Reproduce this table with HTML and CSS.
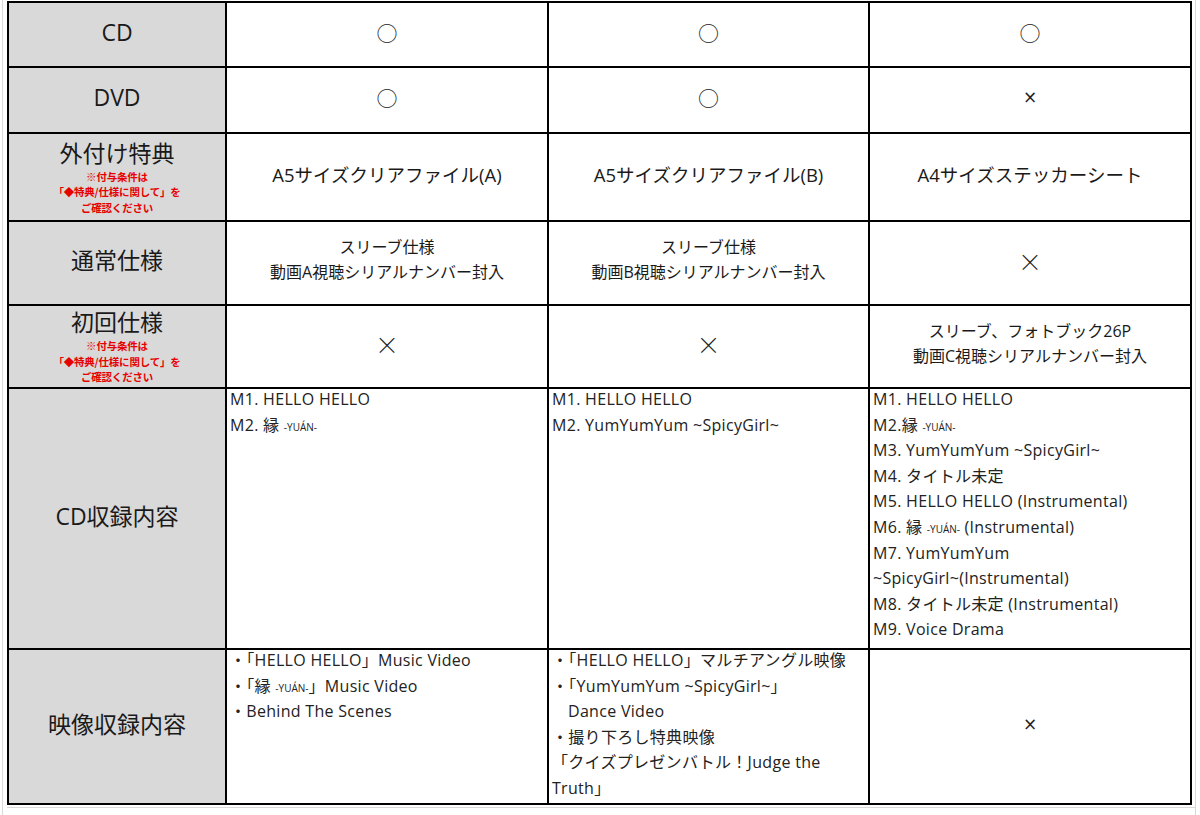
FILE: index.html
```html
<!DOCTYPE html>
<html lang="ja">
<head>
<meta charset="utf-8">
<title>仕様比較</title>
<link rel="stylesheet" href="styles.css">
</head>
<body>
<div class="sheet">
  <div class="grid">
    <div class="cell h"><span class="label">CD</span></div>
    <div class="cell c"><span class="maru">○</span></div>
    <div class="cell c"><span class="maru">○</span></div>
    <div class="cell c"><span class="maru">○</span></div>

    <div class="cell h"><span class="label">DVD</span></div>
    <div class="cell c"><span class="maru">○</span></div>
    <div class="cell c"><span class="maru">○</span></div>
    <div class="cell c"><span class="batsu-s">×</span></div>

    <div class="cell h">
      <span class="label tall">外付け特典</span>
      <span class="note">※付与条件は<br>「◆特典/仕様に関して」を<br>ご確認ください</span>
    </div>
    <div class="cell c"><span class="val">A5サイズクリアファイル(A)</span></div>
    <div class="cell c"><span class="val">A5サイズクリアファイル(B)</span></div>
    <div class="cell c"><span class="val">A4サイズステッカーシート</span></div>

    <div class="cell h"><span class="label">通常仕様</span></div>
    <div class="cell c"><span class="val2">スリーブ仕様<br>動画A視聴シリアルナンバー封入</span></div>
    <div class="cell c"><span class="val2">スリーブ仕様<br>動画B視聴シリアルナンバー封入</span></div>
    <div class="cell c"><span class="batsu-l">×</span></div>

    <div class="cell h">
      <span class="label tall">初回仕様</span>
      <span class="note">※付与条件は<br>「◆特典/仕様に関して」を<br>ご確認ください</span>
    </div>
    <div class="cell c"><span class="batsu-l">×</span></div>
    <div class="cell c"><span class="batsu-l">×</span></div>
    <div class="cell c"><span class="val2">スリーブ、フォトブック26P<br>動画C視聴シリアルナンバー封入</span></div>

    <div class="cell h"><span class="label">CD収録内容</span></div>
    <div class="cell l">
      <div>M1. HELLO HELLO</div>
      <div>M2. 縁 <small>-YUÁN-</small></div>
    </div>
    <div class="cell l">
      <div>M1. HELLO HELLO</div>
      <div>M2. YumYumYum ~SpicyGirl~</div>
    </div>
    <div class="cell l">
      <div>M1. HELLO HELLO</div>
      <div>M2.縁 <small>-YUÁN-</small></div>
      <div>M3. YumYumYum ~SpicyGirl~</div>
      <div>M4. タイトル未定</div>
      <div>M5. HELLO HELLO (Instrumental)</div>
      <div>M6. 縁 <small>-YUÁN-</small> (Instrumental)</div>
      <div>M7. YumYumYum</div>
      <div>~SpicyGirl~(Instrumental)</div>
      <div>M8. タイトル未定 (Instrumental)</div>
      <div>M9. Voice Drama</div>
    </div>

    <div class="cell h"><span class="label">映像収録内容</span></div>
    <div class="cell l">
      <div>・「HELLO HELLO」Music Video</div>
      <div>・「縁 <small>-YUÁN-</small>」Music Video</div>
      <div>・Behind The Scenes</div>
    </div>
    <div class="cell l">
      <div>・「HELLO HELLO」マルチアングル映像</div>
      <div>・「YumYumYum ~SpicyGirl~」</div>
      <div class="ind2">Dance Video</div>
      <div>・撮り下ろし特典映像</div>
      <div>「クイズプレゼンバトル！Judge the</div>
      <div>Truth」</div>
    </div>
    <div class="cell c"><span class="batsu-s">×</span></div>
  </div>
  <div class="below"></div>
</div>
</body>
</html>
```

FILE: styles.css
```css
html, body {
  margin: 0;
  padding: 0;
  background: #ffffff;
}

body {
  width: 1200px;
  height: 815px;
  overflow: hidden;
  font-family: "Open Sans", "Noto Sans CJK JP", sans-serif;
  color: #1a1a1a;
}

.sheet {
  margin-left: 2px;
  padding-left: 4px;
  padding-top: 1px;
  width: 1194px;
  border-left: 1px solid #d9d9d9;
  border-right: 1px solid #d9d9d9;
  height: 820px;
  box-sizing: border-box;
}

.grid {
  display: grid;
  grid-template-columns: 216px 320px 319px 320px;
  grid-template-rows: 63px 64px 86px 82px 81px 259px 153px;
  gap: 2px;
  background: #000;
  border: 2px solid #000;
  width: max-content;
}

.cell {
  background: #fff;
  box-sizing: border-box;
}

.h {
  background: #d9d9d9;
  display: flex;
  flex-direction: column;
  align-items: center;
  justify-content: center;
  text-align: center;
  padding-bottom: 6px;
}

.label {
  font-size: 23px;
  line-height: 28px;
  color: #1a1a1a;
}

.label.tall {
  line-height: 32px;
  margin-top: 4px;
}

.note {
  font-size: 10.5px;
  line-height: 15.5px;
  font-weight: bold;
  color: #e60000;
  font-family: "Noto Sans CJK JP", sans-serif;
  letter-spacing: -0.2px;
}

.c {
  display: flex;
  align-items: center;
  justify-content: center;
  text-align: center;
  padding-bottom: 6px;
}

.val {
  font-size: 18.5px;
}

.val2 {
  font-size: 16px;
  line-height: 25px;
}

.maru {
  font-size: 21px;
  font-family: "Noto Sans CJK JP", sans-serif;
  color: #222;
}

.batsu-s {
  font-size: 17px;
  color: #222;
  font-family: "DejaVu Sans", sans-serif;
}

.batsu-l {
  font-size: 24px;
  color: #222;
  font-family: "Noto Sans CJK JP", sans-serif;
  font-weight: 300;
}

.l {
  padding: 0 0 0 3px;
  font-size: 16px;
  line-height: 25.6px;
  letter-spacing: 0.3px;
  text-align: left;
  color: #222;
}

.l > div:first-child {
  margin-top: -2px;
}

.l small {
  font-size: 10px;
  line-height: 0;
  letter-spacing: 0;
}

.ind2 {
  padding-left: 16px;
}

.below {
  height: 8px;
  border-top: 1px solid #d9d9d9;
  margin-top: 2px;
}
```
